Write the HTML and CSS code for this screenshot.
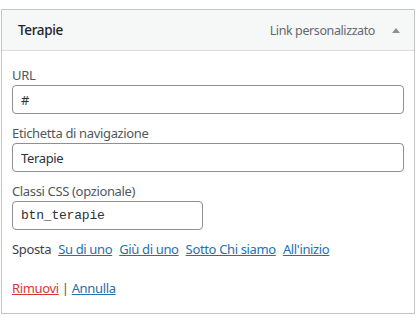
FILE: index.html
```html
<!DOCTYPE html>
<html lang="it">
<head>
    <meta charset="UTF-8">
    <meta name="viewport" content="width=device-width, initial-scale=1.0">
    <title>Voce di menu - Terapie</title>
    <link rel="stylesheet" href="styles.css">
</head>
<body>
    <div class="menu-item">
        <div class="menu-item-head">
            <span class="item-title">Terapie</span>
            <span class="item-type">Link personalizzato</span>
            <span class="item-toggle"></span>
        </div>
        <div class="menu-item-settings">
            <div class="field">
                <label for="url">URL</label>
                <input type="text" id="url" value="#">
            </div>
            <div class="field">
                <label for="title">Etichetta di navigazione</label>
                <input type="text" id="title" value="Terapie">
            </div>
            <div class="field">
                <label for="classes">Classi CSS (opzionale)</label>
                <input type="text" id="classes" class="short code" value="btn_terapie">
            </div>
            <div class="move-row">
                <span>Sposta</span>
                <a href="#">Su di uno</a>
                <a href="#">Giù di uno</a>
                <a href="#">Sotto Chi siamo</a>
                <a href="#">All'inizio</a>
            </div>
            <div class="actions">
                <a href="#" class="delete">Rimuovi</a> <span class="sep">|</span> <a href="#">Annulla</a>
            </div>
        </div>
    </div>
</body>
</html>
```

FILE: styles.css
```css
body {
    margin: 0;
    font-family: "Noto Sans", Arial, sans-serif;
    font-size: 13px;
    letter-spacing: -0.35px;
    color: #3c434a;
    background-color: #fff;
}

.menu-item {
    width: 412px;
    margin: 9px 0 0 1px;
    border: 1px solid #c3c4c7;
    background-color: #fff;
}

.menu-item-head {
    display: flex;
    align-items: center;
    height: 40px;
    padding: 0 14px 0 16px;
    background-color: #f6f7f7;
    border-bottom: 1px solid #dcdcde;
}

.item-title {
    flex: 1;
    font-size: 13.5px;
    font-weight: 500;
    color: #1d2327;
}

.item-type {
    font-size: 12.5px;
    letter-spacing: -0.4px;
    color: #646970;
}

.item-toggle {
    width: 0;
    height: 0;
    margin-left: 17px;
    border-left: 4px solid transparent;
    border-right: 4px solid transparent;
    border-bottom: 5px solid #8c8f94;
}

.menu-item-settings {
    padding: 14px 10px 15px 10px;
}

.field {
    margin-bottom: 9px;
}

.field label {
    display: block;
    line-height: 20px;
    color: #50575e;
}

.field input {
    display: block;
    box-sizing: border-box;
    width: 100%;
    height: 29px;
    padding: 0 8px;
    border: 1px solid #8c8f94;
    border-radius: 4px;
    font-family: "Noto Sans", Arial, sans-serif;
    font-size: 13px;
    letter-spacing: -0.35px;
    color: #2c3338;
}

.field input.short {
    width: 191px;
}

.field input.code {
    font-family: "Liberation Mono", monospace;
    font-size: 13px;
    letter-spacing: -0.2px;
}

.move-row {
    display: flex;
    gap: 7px;
    line-height: 20px;
}

a {
    color: #2271b1;
}

.actions {
    margin-top: 19px;
    line-height: 20px;
}

.actions a.delete {
    color: #d63638;
}

.sep {
    color: #50575e;
}
```
